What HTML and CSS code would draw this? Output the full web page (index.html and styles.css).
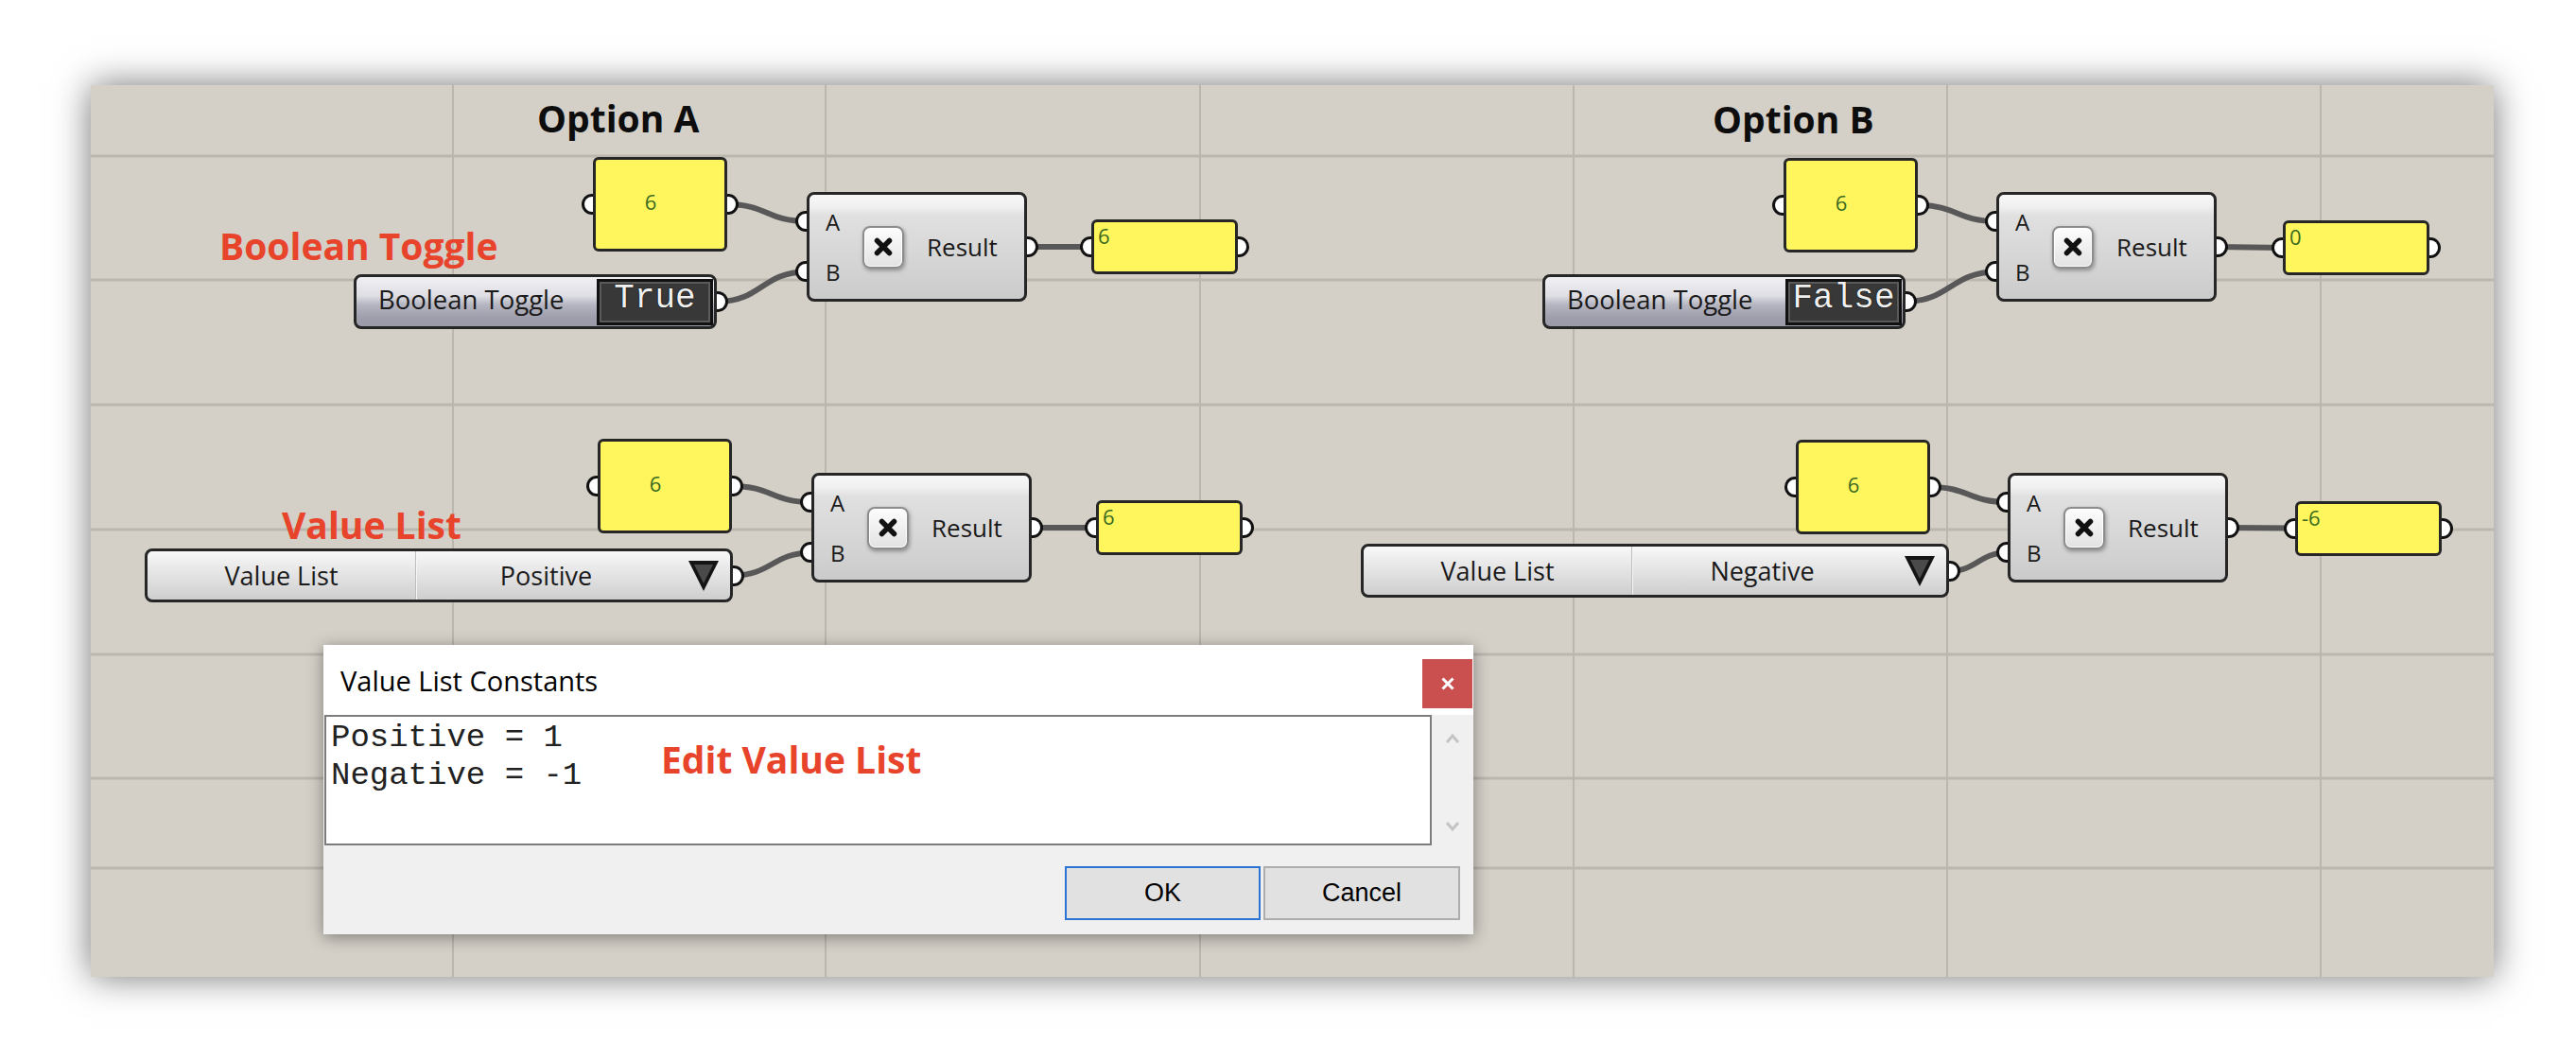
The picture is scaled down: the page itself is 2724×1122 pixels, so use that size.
FILE: index.html
```html
<!DOCTYPE html>
<html>
<head>
<meta charset="utf-8">
<title>Grasshopper Toggle vs Value List</title>
<link rel="stylesheet" href="styles.css">
</head>
<body>
<div class="page">
  <div class="canvas">
    <svg class="layer" width="2541" height="943" viewBox="0 0 2541 943">
      <g class="grid-v">
        <line x1="383" y1="0" x2="383" y2="943"/>
        <line x1="777" y1="0" x2="777" y2="943"/>
        <line x1="1173" y1="0" x2="1173" y2="943"/>
        <line x1="1568" y1="0" x2="1568" y2="943"/>
        <line x1="1963" y1="0" x2="1963" y2="943"/>
        <line x1="2358" y1="0" x2="2358" y2="943"/>
      </g>
      <g class="grid-h">
        <line x1="0" y1="75" x2="2541" y2="75"/>
        <line x1="0" y1="206" x2="2541" y2="206"/>
        <line x1="0" y1="338" x2="2541" y2="338"/>
        <line x1="0" y1="470" x2="2541" y2="470"/>
        <line x1="0" y1="602" x2="2541" y2="602"/>
        <line x1="0" y1="733" x2="2541" y2="733"/>
        <line x1="0" y1="828" x2="2541" y2="828"/>
      </g>
      <g class="wire">
        <path d="M673,126 C715,126 715,144 757,144"/>
        <path d="M662,229 C710,229 709,197.5 757,197.5"/>
        <path d="M990,171 L1058,171"/>
        <path d="M678,424 C720,424 720,441 762,441"/>
        <path d="M679,518.5 C720,518.5 721,494.5 762,494.5"/>
        <path d="M995,468 L1063,468"/>
        <path d="M1932,127 C1973,127 1974,144 2015,144"/>
        <path d="M1918,229 C1966,229 1967,197.5 2015,197.5"/>
        <path d="M2248,171 L2318,172"/>
        <path d="M1945,425 C1986,425 1986,441 2027,441"/>
        <path d="M1964,514 C1995,514 1996,494.5 2027,494.5"/>
        <path d="M2258,468 L2331,468.5"/>
      </g>
    </svg>

    <div class="note note-title title-a">Option A</div>
    <div class="note note-title title-b">Option B</div>
    <div class="note note-red note-toggle">Boolean Toggle</div>
    <div class="note note-red note-vlist">Value List</div>

    <!-- Option A, top row -->
    <div class="node panel num num-a1"><span class="port port-in"></span>6<span class="port port-out"></span></div>
    <div class="node toggle toggle-a"><span class="toggle-label">Boolean Toggle</span><span class="toggle-val">True</span><span class="port port-out"></span></div>
    <div class="node op op-a1">
      <span class="port port-in port-a"></span><span class="port port-in port-b"></span>
      <div class="io"><span>A</span><span>B</span></div>
      <div class="xbtn"><svg width="22" height="22" viewBox="0 0 22 22"><path d="M4.5 4.5 L17.5 17.5 M17.5 4.5 L4.5 17.5"/></svg></div>
      <span class="op-label">Result</span>
      <span class="port port-out"></span>
    </div>
    <div class="node panel res res-a1"><span class="port port-in"></span><span class="port port-out"></span>6</div>

    <!-- Option A, bottom row -->
    <div class="node panel num num-a2"><span class="port port-in"></span>6<span class="port port-out"></span></div>
    <div class="node vlist vlist-a">
      <span class="vl-name">Value List</span><span class="vl-val">Positive</span>
      <span class="vl-arrow"><svg width="34" height="34" viewBox="0 0 34 34"><polygon class="tri-o" points="1,1 33,1 17,33"/><polygon class="tri-i" points="7,5 27,5 17,25"/></svg></span>
      <span class="port port-out"></span>
    </div>
    <div class="node op op-a2">
      <span class="port port-in port-a"></span><span class="port port-in port-b"></span>
      <div class="io"><span>A</span><span>B</span></div>
      <div class="xbtn"><svg width="22" height="22" viewBox="0 0 22 22"><path d="M4.5 4.5 L17.5 17.5 M17.5 4.5 L4.5 17.5"/></svg></div>
      <span class="op-label">Result</span>
      <span class="port port-out"></span>
    </div>
    <div class="node panel res res-a2"><span class="port port-in"></span><span class="port port-out"></span>6</div>

    <!-- Option B, top row -->
    <div class="node panel num num-b1"><span class="port port-in"></span>6<span class="port port-out"></span></div>
    <div class="node toggle toggle-b"><span class="toggle-label">Boolean Toggle</span><span class="toggle-val">False</span><span class="port port-out"></span></div>
    <div class="node op op-b1">
      <span class="port port-in port-a"></span><span class="port port-in port-b"></span>
      <div class="io"><span>A</span><span>B</span></div>
      <div class="xbtn"><svg width="22" height="22" viewBox="0 0 22 22"><path d="M4.5 4.5 L17.5 17.5 M17.5 4.5 L4.5 17.5"/></svg></div>
      <span class="op-label">Result</span>
      <span class="port port-out"></span>
    </div>
    <div class="node panel res res-b1"><span class="port port-in"></span><span class="port port-out"></span>0</div>

    <!-- Option B, bottom row -->
    <div class="node panel num num-b2"><span class="port port-in"></span>6<span class="port port-out"></span></div>
    <div class="node vlist vlist-b">
      <span class="vl-name">Value List</span><span class="vl-val">Negative</span>
      <span class="vl-arrow"><svg width="34" height="34" viewBox="0 0 34 34"><polygon class="tri-o" points="1,1 33,1 17,33"/><polygon class="tri-i" points="7,5 27,5 17,25"/></svg></span>
      <span class="port port-out"></span>
    </div>
    <div class="node op op-b2">
      <span class="port port-in port-a"></span><span class="port port-in port-b"></span>
      <div class="io"><span>A</span><span>B</span></div>
      <div class="xbtn"><svg width="22" height="22" viewBox="0 0 22 22"><path d="M4.5 4.5 L17.5 17.5 M17.5 4.5 L4.5 17.5"/></svg></div>
      <span class="op-label">Result</span>
      <span class="port port-out"></span>
    </div>
    <div class="node panel res res-b2"><span class="port port-in"></span><span class="port port-out"></span>-6</div>

    <!-- Dialog -->
    <div class="dialog">
      <div class="dlg-title">
        <span class="dlg-caption">Value List Constants</span>
        <span class="dlg-close"><svg width="16" height="16" viewBox="0 0 16 16"><path d="M2.5 2.5 L13.5 13.5 M13.5 2.5 L2.5 13.5"/></svg></span>
      </div>
      <div class="dlg-body">
        <div class="dlg-text">Positive = 1<br>Negative = -1</div>
        <div class="dlg-scroll">
          <svg width="16" height="12" viewBox="0 0 16 12"><path d="M2 10 L8 3 L14 10"/></svg>
          <svg width="16" height="12" viewBox="0 0 16 12"><path d="M2 2 L8 9 L14 2"/></svg>
        </div>
      </div>
      <div class="dlg-foot">
        <span class="btn btn-ok">OK</span>
        <span class="btn">Cancel</span>
      </div>
      <div class="note note-red note-edit">Edit Value List</div>
    </div>
  </div>
</div>
</body>
</html>
```

FILE: styles.css
```css
* { box-sizing: border-box; }
html, body { margin: 0; padding: 0; background: #ffffff; overflow: hidden; }
body { font-family: "Open Sans", "Liberation Sans", sans-serif; color: #1a1a1a; }

.page { width: 2724px; height: 1122px; padding: 90px 0 0 96px; }

.canvas {
  position: relative;
  width: 2541px;
  height: 943px;
  background: #d4d0c8;
  box-shadow: 0 0 36px rgba(0, 0, 0, 0.55);
}

.layer { position: absolute; left: 0; top: 0; }
.grid-v line { stroke: #b3afa7; stroke-width: 1.5; }
.grid-h line { stroke: #bbb7af; stroke-width: 3; }
.wire path { fill: none; stroke: #585858; stroke-width: 6; stroke-linecap: round; }

/* annotations */
.note {
  position: absolute;
  font-weight: 700;
  font-size: 39px;
  line-height: 39px;
  white-space: nowrap;
  z-index: 3;
}
.note-title { color: #0d0d0d; }
.note-red { color: #e8432b; }
.title-a { left: 472px; top: 15px; }
.title-b { left: 1715px; top: 16px; }
.note-toggle { left: 136px; top: 150px; }
.note-vlist { left: 202px; top: 445px; }
.note-edit { left: 357px; top: 101px; }

/* generic node */
.node {
  position: absolute;
  border: 3px solid #262626;
  z-index: 1;
}
.port {
  position: absolute;
  width: 12px;
  height: 22px;
  top: 50%;
  margin-top: -11px;
  background: #ffffff;
  border: 3.5px solid #111111;
}
.port-out { left: calc(100% + 3px); border-left: 0; border-radius: 0 11px 11px 0; }
.port-in { right: calc(100% + 3px); border-right: 0; border-radius: 11px 0 0 11px; }

/* yellow panels */
.panel {
  background: #fff65e;
  border-radius: 6px;
  color: #3a6a1f;
  font-size: 22px;
}
.num {
  width: 142px;
  height: 100px;
  display: flex;
  align-items: center;
  justify-content: center;
  padding: 0 20px 6px 0;
}
.res {
  width: 155px;
  height: 58px;
  padding: 1px 4px;
  line-height: 26px;
}

/* boolean toggle */
.toggle {
  width: 384px;
  height: 58px;
  border-radius: 8px;
  background: linear-gradient(#f0f0f4 0%, #dedee4 38%, #b6b6c2 56%, #9e9eac 82%, #9a9aa8 100%);
  display: flex;
  align-items: center;
  padding: 0 0 0 23px;
}
.toggle-label {
  flex: 1;
  font-size: 27.5px;
  line-height: 36px;
  padding-bottom: 4px;
  white-space: nowrap;
}
.toggle-val {
  width: 123px;
  height: 49px;
  margin-right: 1px;
  background: #383838;
  border: 3px solid #111111;
  box-shadow: inset 0 0 0 2px #5a5a5a;
  display: flex;
  align-items: center;
  justify-content: center;
  padding-bottom: 8px;
  font-family: "Liberation Mono", monospace;
  font-size: 36px;
  color: #f0f0f0;
  text-shadow: 0 0 1px #000, 0 0 1px #000;
}

/* multiplication component */
.op {
  width: 233px;
  height: 116px;
  border-radius: 8px;
  background: linear-gradient(#f8f8f8 0%, #efefef 12%, #e0e0e0 20%, #d6d6d6 60%, #cbcbcb 100%);
  display: flex;
  align-items: center;
  padding-left: 17px;
}
.port-a { top: 17px; margin-top: 0; }
.port-b { top: 70px; margin-top: 0; }
.io {
  width: 16px;
  display: flex;
  flex-direction: column;
  gap: 27px;
  font-size: 24px;
  line-height: 26px;
}
.xbtn {
  margin-left: 23px;
  width: 44px;
  height: 45px;
  border: 2px solid #8c8c8c;
  border-radius: 8px;
  background: linear-gradient(#fdfdfd, #e2e2e2);
  box-shadow: 1px 2px 4px rgba(0, 0, 0, 0.35), inset 0 0 0 1px #ffffff;
  display: flex;
  align-items: center;
  justify-content: center;
}
.xbtn path { stroke: #111111; stroke-width: 5.5; stroke-linecap: round; fill: none; }
.op-label {
  margin-left: 24px;
  font-size: 26px;
  line-height: 34px;
}

/* value list */
.vlist {
  width: 622px;
  height: 57px;
  border-radius: 8px;
  background: linear-gradient(#f8f8f8 0%, #ebebeb 30%, #dddddd 65%, #cecece 100%);
  display: flex;
  align-items: stretch;
  font-size: 27px;
}
.vl-name {
  width: 284px;
  display: flex;
  align-items: center;
  justify-content: center;
  border-right: 1px solid #bdbdbd;
  box-shadow: 1px 0 0 #f7f7f7;
}
.vl-val {
  width: 275px;
  display: flex;
  align-items: center;
  justify-content: center;
}
.vl-arrow {
  flex: 1;
  display: flex;
  align-items: center;
  padding-left: 12px;
}
.tri-o { fill: #141414; }
.tri-i { fill: #4a4a4a; }

/* positions of nodes on the canvas */
.num-a1 { left: 531px; top: 76px; }
.toggle-a { left: 278px; top: 200px; }
.op-a1 { left: 757px; top: 113px; }
.res-a1 { left: 1058px; top: 142px; }
.num-a2 { left: 536px; top: 374px; }
.vlist-a { left: 57px; top: 490px; }
.op-a2 { left: 762px; top: 410px; }
.res-a2 { left: 1063px; top: 439px; }
.num-b1 { left: 1790px; top: 77px; }
.toggle-b { left: 1535px; top: 200px; }
.op-b1 { left: 2015px; top: 113px; }
.res-b1 { left: 2318px; top: 143px; }
.num-b2 { left: 1803px; top: 375px; }
.vlist-b { left: 1343px; top: 485px; }
.op-b2 { left: 2027px; top: 410px; }
.res-b2 { left: 2331px; top: 440px; }

/* dialog */
.dialog {
  position: absolute;
  left: 246px;
  top: 592px;
  width: 1216px;
  height: 306px;
  background: #f0f0f0;
  box-shadow: 0 3px 16px rgba(0, 0, 0, 0.4);
  display: flex;
  flex-direction: column;
  z-index: 5;
}
.dlg-title {
  height: 74px;
  background: #ffffff;
  display: flex;
  justify-content: space-between;
  align-items: flex-start;
}
.dlg-caption {
  margin: 18px 0 0 18px;
  font-size: 29px;
  line-height: 40px;
  color: #000000;
}
.dlg-close {
  margin: 15px 1px 0 0;
  width: 53px;
  height: 52px;
  background: #c9504f;
  display: flex;
  align-items: center;
  justify-content: center;
}
.dlg-close path { stroke: #ffffff; stroke-width: 3; fill: none; }
.dlg-body {
  height: 138px;
  display: flex;
  padding-left: 1px;
}
.dlg-text {
  width: 1171px;
  background: #ffffff;
  border: 2px solid #7c7c7c;
  padding: 2px 5px;
  font-family: "Liberation Mono", monospace;
  font-size: 34px;
  line-height: 40px;
  color: #222222;
}
.dlg-scroll {
  flex: 1;
  display: flex;
  flex-direction: column;
  align-items: center;
  justify-content: space-between;
  padding: 19px 0 14px;
}
.dlg-scroll path { stroke: #c4c4c4; stroke-width: 3; fill: none; }
.dlg-foot {
  flex: 1;
  display: flex;
  justify-content: flex-end;
  align-items: flex-start;
  gap: 3px;
  padding: 22px 14px 0 0;
}
.btn {
  width: 208px;
  height: 57px;
  background: #e1e1e1;
  border: 2px solid #adadad;
  display: flex;
  align-items: center;
  justify-content: center;
  font-family: "Liberation Sans", Arial, sans-serif;
  font-size: 27px;
  color: #000000;
}
.btn-ok { width: 207px; border-color: #2b74d6; }
```
